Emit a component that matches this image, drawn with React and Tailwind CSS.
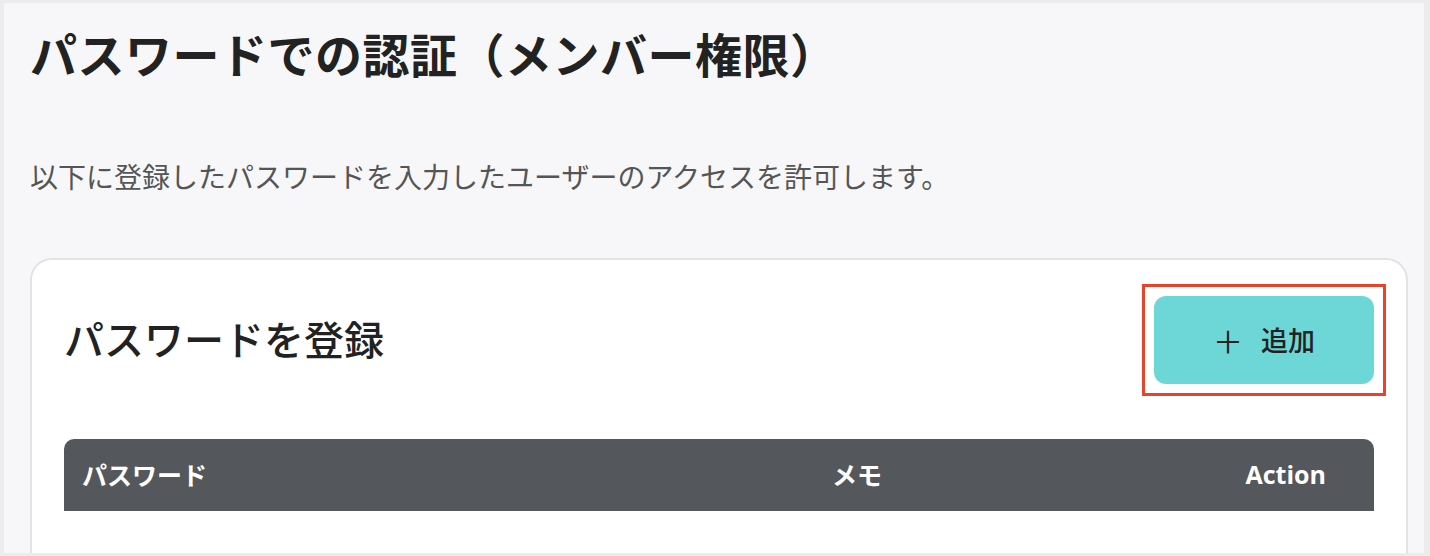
export default function App() {
    return (
        <div
            className="w-full h-[556px] bg-[#ececec] pt-[3px] pl-[4px] pr-[6px] pb-[3px] overflow-hidden"
            style={{ fontFamily: '"Noto Sans CJK JP", "Noto Sans", sans-serif' }}
        >
            <div className="h-full bg-[#f7f7f9] overflow-hidden pl-[26px] pr-[16px]">
                {/* PAGE TITLE */}
                <h1 className="pt-[16px] text-[47px] leading-[68px] font-bold text-[#222] tracking-[0.5px]">
                    パスワードでの認証（メンバー権限）
                </h1>

                <p className="mt-[69px] text-[28px] leading-[40px] text-[#555]">
                    以下に登録したパスワードを入力したユーザーのアクセスを許可します。
                </p>

                {/* CARD */}
                <div className="mt-[62px] bg-white border-2 border-[#e3e3e5] rounded-[22px] px-[32px] pt-[24px] h-[400px]">
                    <div className="flex items-start justify-between">
                        <h2 className="mt-[25px] text-[40px] leading-[58px] font-medium text-[#222]">
                            パスワードを登録
                        </h2>

                        <div className="border-[3px] border-[#e8432a] p-[9px] -mr-[12px]">
                            <button className="w-[220px] h-[88px] rounded-[12px] bg-[#6dd6d6] flex items-center justify-center gap-[18px] text-[27px] font-medium text-[#222]">
                                <span className="text-[30px] font-normal leading-none">＋</span>
                                <span>追加</span>
                            </button>
                        </div>
                    </div>

                    {/* TABLE HEADER */}
                    <div className="mt-[43px] h-[72px] bg-[#54575c] rounded-t-[10px] flex items-center text-white text-[25px] font-bold">
                        <div className="pl-[18px] w-[768px]">パスワード</div>
                        <div className="flex-1">メモ</div>
                        <div className="pr-[48px]" style={{ fontFamily: '"Open Sans", "Noto Sans", sans-serif' }}>Action</div>
                    </div>
                </div>
            </div>
        </div>
    );
}
